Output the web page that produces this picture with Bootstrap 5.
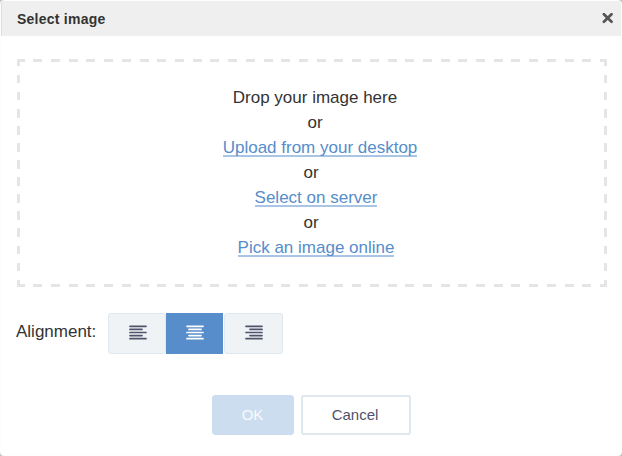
<!DOCTYPE html>
<html lang="en">
<head>
<meta charset="utf-8">
<title>Select image</title>
<link href="https://cdn.jsdelivr.net/npm/bootstrap@5.3.0/dist/css/bootstrap.min.css" rel="stylesheet">
<style>
html,body{height:100%}
body{background:#c4c4c4;font-family:"Liberation Sans",Arial,sans-serif;color:#333;overflow:hidden}
.dlg{width:622px;height:456px;border:1px solid #fdfdfd;border-radius:4px}
.dlg-head{height:35px;background:#efefef;border-left:1px solid #ddd;border-radius:3px 3px 0 0;padding:0 8px 0 15px}
.dlg-title{font-size:14px;line-height:35px;font-weight:bold;padding-top:1px;letter-spacing:.24px}
.dlg-close{width:11px;height:11px}
.dropbox{margin:23px 14px 0 16px;height:228px;padding-top:26px;font-size:17px;line-height:25px;
 background:
 repeating-linear-gradient(90deg,#e5e5e5 0 9px,transparent 9px 17.71px) -1.4px 0/600px 3px no-repeat,
 repeating-linear-gradient(90deg,#e5e5e5 0 9px,transparent 9px 17.71px) -1.4px 100%/600px 3px no-repeat,
 repeating-linear-gradient(180deg,#e5e5e5 0 8.4px,transparent 8.4px 17.05px) 0 -1px/3px 240px no-repeat,
 repeating-linear-gradient(180deg,#e5e5e5 0 8.4px,transparent 8.4px 17.05px) 100% -1px/3px 240px no-repeat}
.lead-in{padding-left:6px}
.or-row{padding-right:2px}
.dropbox a{color:#568dca;border-bottom:2px solid #a9c5e6;line-height:15px;height:17px}
.dropbox .link-row{height:25px;padding:5px 0 0 8px}
.dropbox .link-first{padding-left:16px}
.align-row{margin:26px 0 0 15px;font-size:17px}
.align-label{padding-bottom:4px}
.align-group{margin-left:12px}
.align-group .btn{width:58px;height:41px;border:1px solid #e0e8ef;background:#eff3f6;color:#50536b;border-radius:3px;padding:0 0 2px 1px}
.align-group .btn.active{width:57px;background:#568dca;border-color:#568dca;color:#fff;border-radius:0}
.align-group .btn:last-child{width:59px;margin-left:1px;padding-left:0}
.actions{margin-top:41px;gap:7px}
.actions .btn{height:40px;font-size:15px;line-height:20px;padding:0;border-radius:3px}
.ok-btn{width:82px}
.ok-btn:disabled{background:#ccddef;border-color:#ccddef;color:#f7fafd;opacity:1}
.actions .cancel-btn,.actions .cancel-btn:hover{width:110px;border:2px solid #e0e8ef;background:#fff;color:#50536b;padding-right:1px}
</style>
</head>
<body>
<div class="dlg bg-white overflow-hidden">
  <div class="dlg-head d-flex align-items-center justify-content-between">
    <div class="dlg-title">Select image</div>
    <svg class="dlg-close" viewBox="0 0 11 11" fill="none" stroke="#555" stroke-width="2.7" stroke-linecap="round"><path d="M1.9 1.2 9.5 8.8M9.5 1.2 1.9 8.8"/></svg>
  </div>
  <div class="dropbox d-flex flex-column align-items-center">
    <div class="lead-in">Drop your image here</div>
    <div class="lead-in">or</div>
    <div class="link-row link-first d-flex"><a href="#" class="text-decoration-none">Upload from your desktop</a></div>
    <div class="or-row">or</div>
    <div class="link-row d-flex"><a href="#" class="text-decoration-none">Select on server</a></div>
    <div class="or-row">or</div>
    <div class="link-row d-flex"><a href="#" class="text-decoration-none">Pick an image online</a></div>
  </div>
  <div class="align-row d-flex align-items-center">
    <span class="align-label">Alignment:</span>
    <div class="align-group d-flex">
      <button class="btn d-flex align-items-center justify-content-center" aria-label="Left"><svg width="18" height="15" stroke="currentColor" stroke-width="1.7" stroke-linecap="round"><path d="M1 1.3H17M1 4.4H13M1 7.5H17M1 10.6H13M1 13.7H17"/></svg></button>
      <button class="btn active d-flex align-items-center justify-content-center" aria-label="Center"><svg width="18" height="15" stroke="currentColor" stroke-width="1.7" stroke-linecap="round"><path d="M1 1.3H17M3 4.4H15M1 7.5H17M3 10.6H15M1 13.7H17"/></svg></button>
      <button class="btn d-flex align-items-center justify-content-center" aria-label="Right"><svg width="18" height="15" stroke="currentColor" stroke-width="1.7" stroke-linecap="round"><path d="M1 1.3H17M5 4.4H17M1 7.5H17M5 10.6H17M1 13.7H17"/></svg></button>
    </div>
  </div>
  <div class="actions d-flex justify-content-center">
    <button class="btn ok-btn" disabled>OK</button>
    <button class="btn cancel-btn">Cancel</button>
  </div>
</div>
<script src="https://cdn.jsdelivr.net/npm/bootstrap@5.3.0/dist/js/bootstrap.bundle.min.js"></script>
</body>
</html>
